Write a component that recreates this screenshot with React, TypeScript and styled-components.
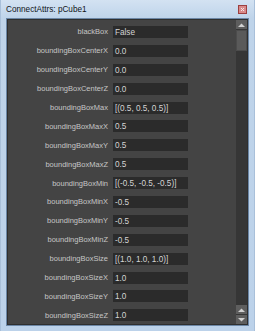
import styled, { createGlobalStyle } from "styled-components";

type Attr = { name: string; value: string };

const attrs: Attr[] = [
  { name: "blackBox", value: "False" },
  { name: "boundingBoxCenterX", value: "0.0" },
  { name: "boundingBoxCenterY", value: "0.0" },
  { name: "boundingBoxCenterZ", value: "0.0" },
  { name: "boundingBoxMax", value: "[(0.5, 0.5, 0.5)]" },
  { name: "boundingBoxMaxX", value: "0.5" },
  { name: "boundingBoxMaxY", value: "0.5" },
  { name: "boundingBoxMaxZ", value: "0.5" },
  { name: "boundingBoxMin", value: "[(-0.5, -0.5, -0.5)]" },
  { name: "boundingBoxMinX", value: "-0.5" },
  { name: "boundingBoxMinY", value: "-0.5" },
  { name: "boundingBoxMinZ", value: "-0.5" },
  { name: "boundingBoxSize", value: "[(1.0, 1.0, 1.0)]" },
  { name: "boundingBoxSizeX", value: "1.0" },
  { name: "boundingBoxSizeY", value: "1.0" },
  { name: "boundingBoxSizeZ", value: "1.0" },
];

const GlobalStyle = createGlobalStyle`
  html, body {
    margin: 0;
    padding: 0;
    background: #bcd2ea;
  }
`;

export default function App() {
  return (
    <>
      <GlobalStyle />
      <Window>
        <TitleBar>
          <Title>ConnectAttrs: pCube1</Title>
          <CloseButton>
            <svg width="9" height="9" viewBox="0 0 9 9">
              <rect x="0.5" y="0.5" width="8" height="8" fill="#d98a8a" stroke="#9c3f3f" />
              <path d="M3 3 L6 6 M6 3 L3 6" stroke="#f4e6e6" strokeWidth="1" />
            </svg>
          </CloseButton>
        </TitleBar>
        <Panel>
          <List>
            {attrs.map((a) => (
              <Row key={a.name}>
                <Label>{a.name}</Label>
                <Field>{a.value}</Field>
              </Row>
            ))}
          </List>
          <ScrollBar>
            <ArrowButton>
              <svg width="7" height="4" viewBox="0 0 7 4">
                <path d="M0 4 L3.5 0.5 L7 4 Z" fill="#d0d0d0" />
              </svg>
            </ArrowButton>
            <Thumb />
            <Track />
            <ArrowButton>
              <svg width="7" height="4" viewBox="0 0 7 4">
                <path d="M0 4 L3.5 0.5 L7 4 Z" fill="#d0d0d0" />
              </svg>
            </ArrowButton>
            <ArrowButton>
              <svg width="7" height="4" viewBox="0 0 7 4">
                <path d="M0 0 L3.5 3.5 L7 0 Z" fill="#d0d0d0" />
              </svg>
            </ArrowButton>
          </ScrollBar>
        </Panel>
      </Window>
    </>
  );
}

const Window = styled.div`
  width: 255px;
  height: 331px;
  display: flex;
  flex-direction: column;
  box-sizing: border-box;
  background: linear-gradient(#d3e2f2 0px, #bfd4ea 18px, #bcd2ea 100%);
  border-left: 1px solid #a9c0da;
  border-right: 1px solid #a9c0da;
`;

const TitleBar = styled.div`
  height: 18px;
  display: flex;
  align-items: center;
  justify-content: space-between;
  padding: 1px 7px 0 5px;
  box-sizing: border-box;
`;

const Title = styled.span`
  font-family: "Liberation Sans", Arial, sans-serif;
  font-size: 8.2px;
  color: #101418;
`;

const CloseButton = styled.div`
  width: 9px;
  height: 9px;
  display: flex;
`;

const Panel = styled.div`
  flex: 1;
  margin: 0 5px 5px 5px;
  display: flex;
  background: #444444;
  border: 1px solid #6c87a6;
  box-shadow: inset 0 0 0 1px #2f2f2f;
  min-height: 0;
`;

const List = styled.div`
  flex: 1;
  display: flex;
  flex-direction: column;
  padding-top: 3.5px;
`;

const Row = styled.div`
  height: 18.9px;
  display: grid;
  grid-template-columns: 101px 75px;
  column-gap: 5px;
  align-items: center;
`;

const Label = styled.span`
  text-align: right;
  font-family: "Liberation Sans", Arial, sans-serif;
  font-size: 7.5px;
  color: #c6c6c6;
  white-space: nowrap;
`;

const Field = styled.div`
  height: 12px;
  background: #2b2b2b;
  padding-left: 2px;
  font-family: "Liberation Sans", Arial, sans-serif;
  font-size: 8.2px;
  line-height: 13px;
  color: #d4d4d4;
  white-space: nowrap;
  overflow: hidden;
`;

const ScrollBar = styled.div`
  width: 11px;
  margin: 1px 1px 1px 0;
  display: flex;
  flex-direction: column;
  gap: 1px;
  background-color: #363636;
  background-image: radial-gradient(#3e3e3e 0.6px, transparent 0.7px);
  background-size: 2px 2px;
`;

const ArrowButton = styled.div`
  height: 9px;
  display: flex;
  align-items: center;
  justify-content: center;
  background: #5e5e5e;
`;

const Thumb = styled.div`
  height: 21px;
  background-color: #5a5a5a;
  background-image: radial-gradient(#3f3f3f 0.5px, transparent 0.6px);
  background-size: 2px 2px;
  background-position: 1px 2px;
  border: 1px solid #4c4c4c;
  box-sizing: border-box;
`;

const Track = styled.div`
  flex: 1;
`;
